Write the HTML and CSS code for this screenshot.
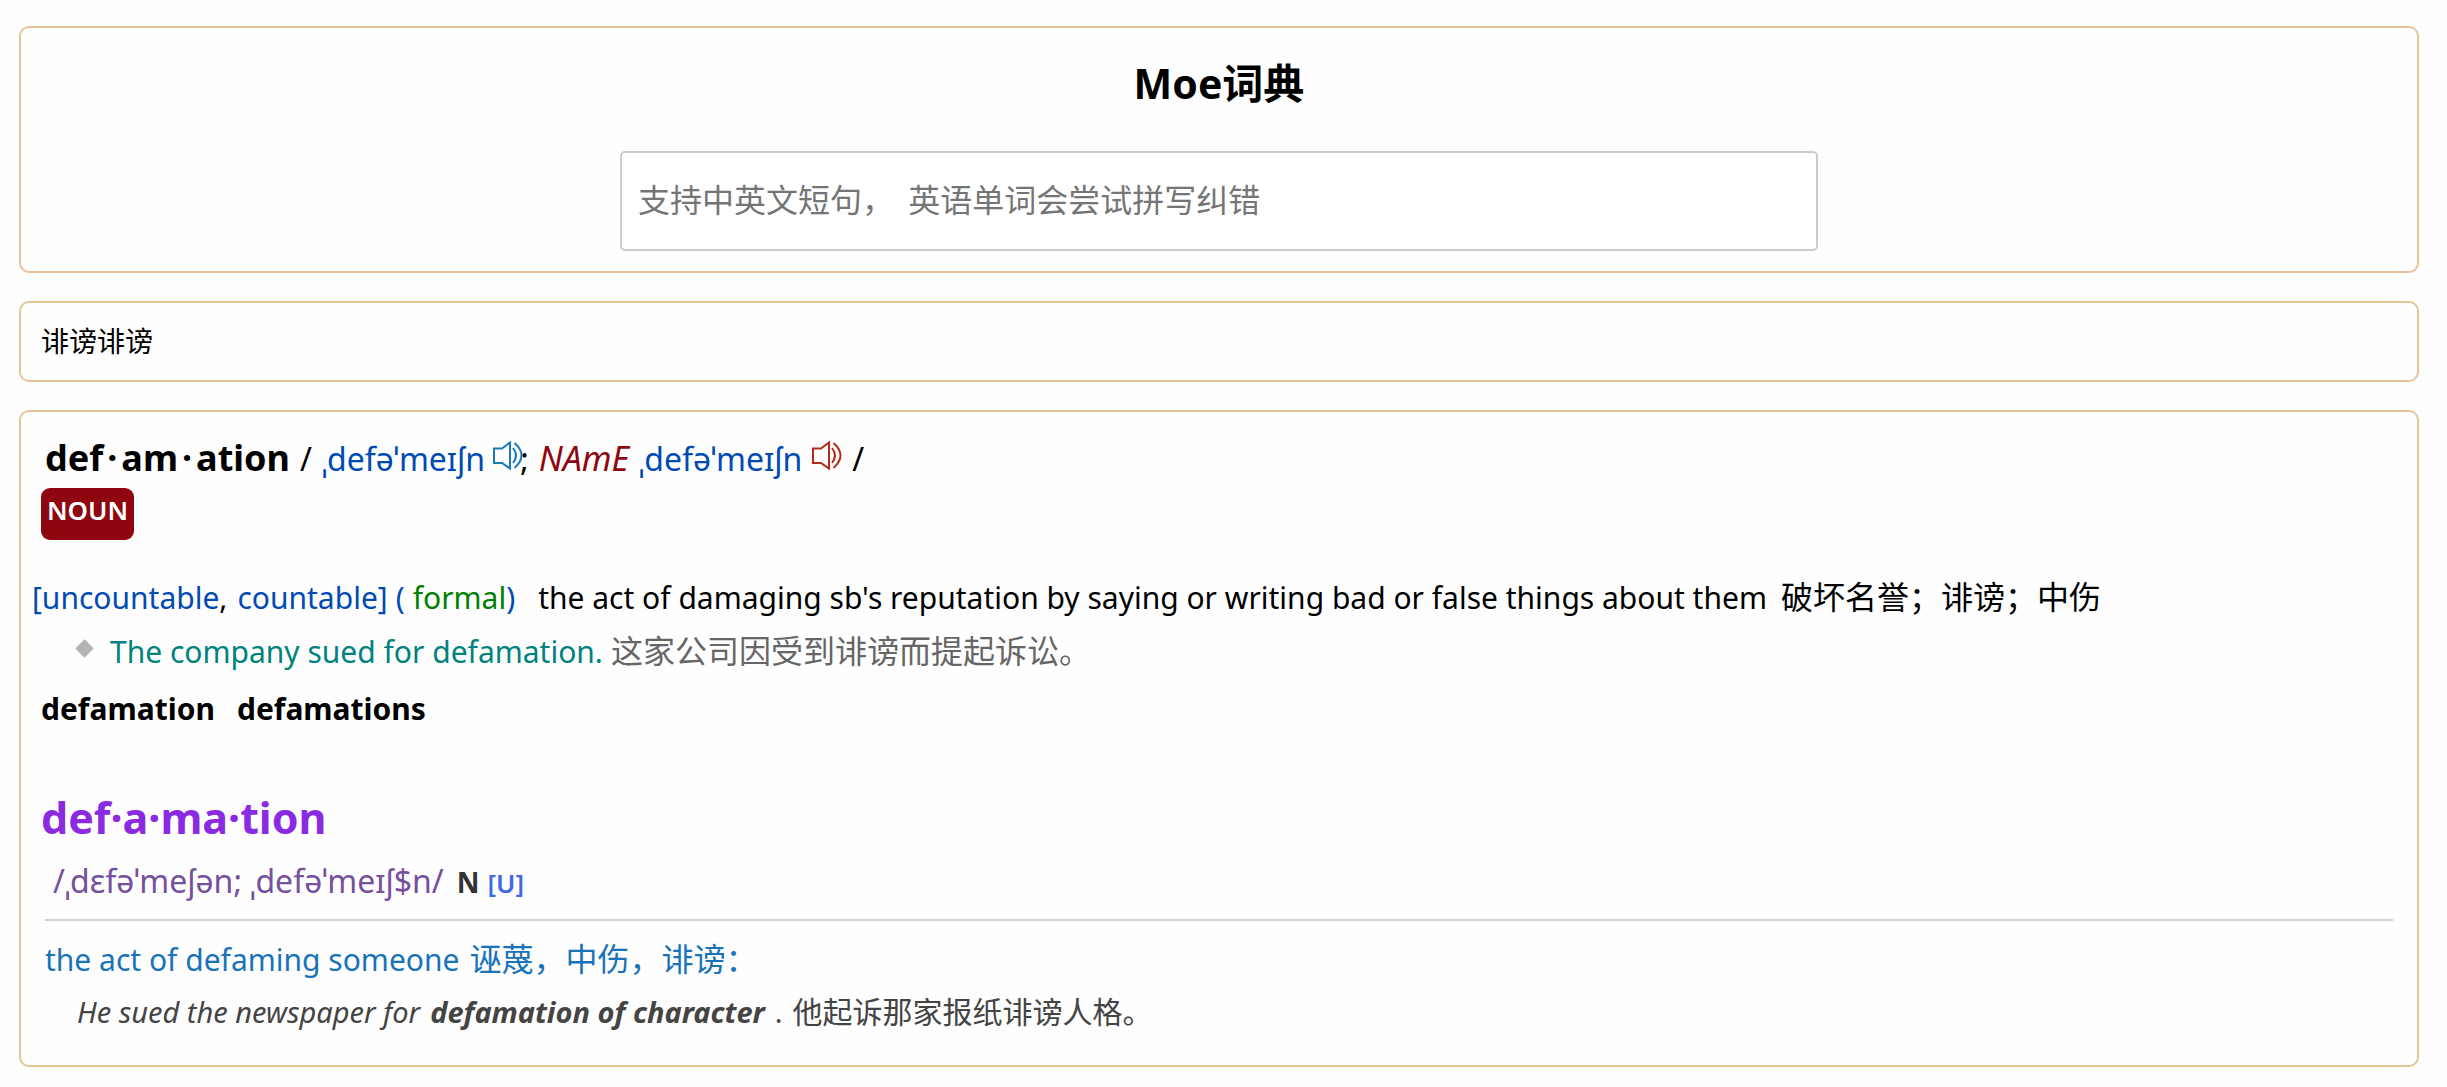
FILE: index.html
```html
<!DOCTYPE html>
<html lang="zh-CN">
<head>
<meta charset="utf-8">
<title>Moe词典</title>
<link rel="stylesheet" href="styles.css">
</head>
<body>
<header class="card search">
  <h1 class="title">Moe词典</h1>
  <input class="search-input" type="text" aria-label="查询" placeholder="支持中英文短句，&nbsp; 英语单词会尝试拼写纠错">
</header>
<section class="card summary">诽谤诽谤</section>
<main class="card entries">
  <article class="entry">
    <div class="row head">
      <h2 class="headword">def<span class="dot">·</span>am<span class="dot">·</span>ation</h2>
      <span>/</span>
      <span class="ipa">ˌdefəˈmeɪʃn</span>
      <span class="sound"><button class="speaker uk" type="button" aria-label="英式发音"><svg viewBox="0 0 30 30"><path d="M1 7.500h8L17 1.500v26L9 22H1z"/><path d="M20 7q6 7.500 0 15M21.500 2q14 12.500 0 25"/></svg></button>;</span>
      <span class="region">NAmE</span>
      <span class="ipa">ˌdefəˈmeɪʃn</span>
      <button class="speaker us" type="button" aria-label="美式发音"><svg viewBox="0 0 30 30"><path d="M1 7.500h8L17 1.500v26L9 22H1z"/><path d="M20 7q6 7.500 0 15M21.500 2q14 12.500 0 25"/></svg></button>
      <span>/</span>
    </div>
    <span class="pos">NOUN</span>
    <div class="row sense">
      <span class="grammar">[uncountable<span class="comma">,</span></span>
      <span class="grammar">countable]</span>
      <span class="grammar">(</span>
      <span class="label">formal<span class="grammar">)</span></span>
      <span class="definition">the act of damaging sb's reputation by saying or writing bad or false things about them</span>
      <span class="zh">破坏名誉；诽谤；中伤</span>
    </div>
    <div class="row example">
      <span class="diamond"></span>
      <span class="example-en">The company sued for defamation.</span>
      <span class="zh example-zh">这家公司因受到诽谤而提起诉讼。</span>
    </div>
    <div class="row forms"><b>defamation</b><b>defamations</b></div>
  </article>
  <article class="entry second">
    <h2 class="headword2">def·a·ma·tion</h2>
    <div class="row phonetics">
      <span class="ipa2">/ˌdɛfəˈmeʃən; ˌdefəˈmeɪʃ$n/</span>
      <b class="noun">N</b>
      <b class="count">[U]</b>
    </div>
    <div class="row meaning">
      <span>the act of defaming someone</span>
      <span class="zh">诬蔑，中伤，诽谤：</span>
    </div>
    <div class="row quote">
      <i>He sued the newspaper for</i>
      <i><b>defamation of character</b></i>
      <span>.</span>
      <span class="zh2">他起诉那家报纸诽谤人格。</span>
    </div>
  </article>
</main>
</body>
</html>
```
FILE: styles.css
```css
* { box-sizing: border-box; }
body {
  margin: 26px 28px 18px 19px;
  background: #fefefe;
  color: #000;
  font-family: "Noto Sans", "Noto Sans CJK SC", sans-serif;
  font-size: 30px;
  line-height: 40px;
}
h1, h2 { margin: 0; }
.card {
  border: 2px solid #e7c397;
  border-radius: 10px;
  margin-bottom: 28px;
}
.search {
  display: flex;
  flex-direction: column;
  align-items: center;
  padding: 30px 0 20px;
}
.title { font-size: 41px; line-height: 50px; margin-bottom: 43px; }
.search-input {
  width: 50%;
  height: 100px;
  padding: 0 16px 6px;
  border: 2px solid #ccc;
  border-radius: 5px;
  background: #fff;
  font-family: "Noto Sans CJK SC", sans-serif;
  font-size: 32px;
}
.search-input::placeholder { color: #757575; }
.summary { padding: 18px 20px 19px; font-size: 28px; }
.entries { padding: 21px 24px 33px 20px; margin-bottom: 0; }
.row { display: flex; align-items: baseline; }
.head { gap: 10px; padding-left: 4px; height: 53px; font-size: 32px; }
.headword { font-size: 36px; line-height: 50px; }
.dot { margin: 0 4px; }
.ipa { color: #004bb3; }
.region { color: #8f0610; font-size: 34px; font-style: italic; }
.sound { display: flex; align-items: baseline; }
.speaker {
  padding: 0;
  border: 0;
  background: none;
  line-height: 0;
}
.speaker svg {
  width: 30px;
  height: 30px;
  fill: none;
  stroke: currentColor;
  stroke-width: 2;
}
.uk { color: #1878b8; margin: 0 -3px 0 -2px; }
.us { color: #b52a18; }
.pos {
  display: inline-block;
  margin-top: 2px;
  padding: 0 6px 8px;
  border-radius: 9px;
  background: #8f0610;
  color: #fff;
  font-size: 26px;
  font-weight: 600;
  line-height: 44px;
}
.sense { gap: 8px; margin: 37px 0 0 -9px; }
.grammar { color: #004bb3; }
.comma { color: #000; margin-right: 2px; }
.label { color: green; }
.definition { margin: 0 6px 0 15px; }
.zh { font-size: 32px; }
.example { gap: 8px; padding-left: 37px; margin-top: 13px; }
.diamond {
  align-self: center;
  width: 13px;
  height: 13px;
  margin: 0 11px 6px 0;
  background: #b3b3b3;
  transform: rotate(45deg);
}
.example-en { color: #00827f; }
.example-zh { color: #666; }
.forms { gap: 22px; margin-top: 17px; }
.second { margin-top: 59px; }
.headword2 { color: #8a2be2; font-size: 43px; line-height: 60px; }
.phonetics {
  gap: 8px;
  margin: 0 0 0 4px;
  padding: 13px 0 16px 8px;
  border-bottom: 2px solid #d0d0d0;
}
.ipa2 { margin-right: 5px; color: #76509c; font-size: 32px; }
.noun { color: #333; font-size: 28px; }
.count { color: #4169e1; font-size: 26px; font-weight: 600; }
.meaning { gap: 10px; margin-top: 18px; padding-left: 4px; color: #1873b9; }
.quote { gap: 10px; margin-top: 12px; padding-left: 36px; color: #444; font-size: 29px; }
.zh2 { font-size: 30px; }
```
